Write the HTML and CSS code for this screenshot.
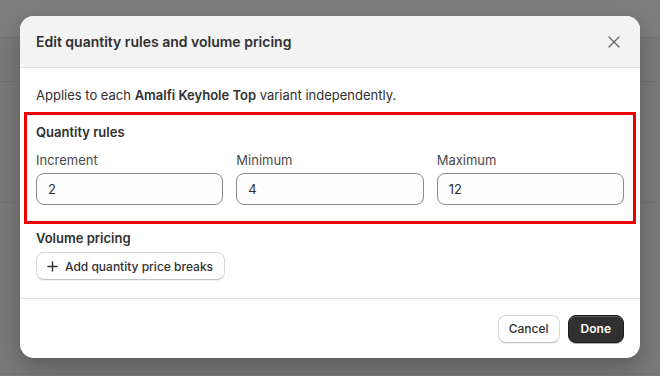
FILE: index.html
```html
<!DOCTYPE html>
<html lang="en">

<head>
    <meta charset="UTF-8">
    <meta name="viewport" content="width=device-width, initial-scale=1.0">
    <title>Edit quantity rules and volume pricing</title>
    <link rel="stylesheet" href="styles.css">
</head>

<body>
    <!-- dimmed page behind the modal -->
    <div class="backdrop">
        <div class="page-row h37"></div>
        <div class="page-row h44"></div>
        <div class="page-row h120"></div>
        <div class="page-row h170"></div>
    </div>

    <div class="modal">
        <div class="modal-header">
            <h2>Edit quantity rules and volume pricing</h2>
            <button class="close" aria-label="Close">
                <svg width="12" height="12" viewBox="0 0 12 12">
                    <path d="M1 1 L11 11 M11 1 L1 11" stroke="#6b6b6b" stroke-width="1.4" stroke-linecap="round" />
                </svg>
            </button>
        </div>

        <div class="modal-body">
            <p class="intro">Applies to each <strong>Amalfi Keyhole Top</strong> variant independently.</p>

            <div class="rules highlight">
                <h3>Quantity rules</h3>
                <div class="fields">
                    <label class="field">
                        <span>Increment</span>
                        <input type="text" value="2">
                    </label>
                    <label class="field">
                        <span>Minimum</span>
                        <input type="text" value="4">
                    </label>
                    <label class="field">
                        <span>Maximum</span>
                        <input type="text" value="12">
                    </label>
                </div>
            </div>

            <div class="pricing">
                <h3>Volume pricing</h3>
                <button class="btn add">
                    <svg width="11" height="11" viewBox="0 0 12 12">
                        <path d="M6 1 V11 M1 6 H11" stroke="#303030" stroke-width="1.5" stroke-linecap="round" />
                    </svg>
                    Add quantity price breaks
                </button>
            </div>
        </div>

        <div class="modal-footer">
            <button class="btn cancel">Cancel</button>
            <button class="btn primary">Done</button>
        </div>
    </div>
</body>

</html>
```

FILE: styles.css
```css
body {
    margin: 0;
    padding: 0;
    font-family: Inter, "Noto Sans", Arial, sans-serif;
    font-size: 13px;
    color: #303030;
    background: #7a7a7a;
    height: 376px;
    overflow: hidden;
    position: relative;
}

.backdrop {
    display: flex;
    flex-direction: column;
}

.page-row {
    border-bottom: 1px solid #727272;
}

.h37 { height: 37px; background: #7d7d7d; }
.h44 { height: 43px; }
.h120 { height: 120px; }
.h170 { height: 170px; }

.modal {
    position: absolute;
    top: 16px;
    left: 20px;
    width: 620px;
    height: 342px;
    background: #fff;
    border-radius: 14px;
    overflow: hidden;
    display: flex;
    flex-direction: column;
    box-shadow: 0 10px 24px rgba(0, 0, 0, 0.25);
}

.modal-header {
    height: 52px;
    box-sizing: border-box;
    background: #f3f3f3;
    border-bottom: 1px solid #e3e3e3;
    display: flex;
    align-items: center;
    justify-content: space-between;
    padding: 0 16px;
}

.modal-header h2 {
    margin: 0;
    font-size: 14px;
    font-weight: 600;
    color: #303030;
}

.close {
    border: none;
    background: none;
    padding: 0;
    width: 20px;
    height: 20px;
    display: flex;
    align-items: center;
    justify-content: center;
}

.modal-body {
    padding: 17px 16px 0;
    flex: 1;
    border-bottom: 1px solid #e3e3e3;
}

.intro {
    margin: 0 0 7px;
    line-height: 20px;
}

.intro strong {
    font-weight: 600;
}

h3 {
    margin: 0;
    font-size: 13px;
    font-weight: 600;
    line-height: 20px;
}

.rules.highlight {
    margin: 0 -12px;
    border: 3px solid #ee0000;
    padding: 7px 9px 16px;
}

.fields {
    display: grid;
    grid-template-columns: repeat(3, 1fr);
    gap: 13px;
    margin-top: 8px;
}

.field {
    display: flex;
    flex-direction: column;
    gap: 3px;
}

.field span {
    line-height: 20px;
    color: #4a4a4a;
}

.field input {
    height: 32px;
    box-sizing: border-box;
    border: 1px solid #8a8a8a;
    border-radius: 8px;
    background: #fdfdfd;
    padding: 0 11px;
    font-family: inherit;
    font-size: 13px;
    color: #303030;
    outline: none;
    width: 100%;
}

.pricing {
    padding-top: 4px;
}

.btn {
    font-family: inherit;
    font-size: 12px;
    font-weight: 500;
    color: #303030;
    background: #fff;
    border: 1px solid #d6d6d6;
    border-bottom-color: #c4c4c4;
    border-radius: 8px;
    height: 28px;
    padding: 0 12px;
    display: inline-flex;
    align-items: center;
    gap: 6px;
    box-shadow: 0 1px 0 rgba(0, 0, 0, 0.05);
}

.btn.add {
    margin-top: 4px;
    padding: 0 11px 0 10px;
    gap: 7px;
}

.btn.cancel {
    padding: 0 10px;
}

.modal-footer {
    height: 59px;
    display: flex;
    align-items: center;
    justify-content: flex-end;
    gap: 8px;
    padding: 0 16px;
}

.btn.primary {
    background: #303030;
    color: #fff;
    font-weight: 600;
    border-color: #1a1a1a;
    box-shadow: inset 0 1px 0 rgba(255, 255, 255, 0.2), 0 1px 0 rgba(0, 0, 0, 0.3);
}
```
